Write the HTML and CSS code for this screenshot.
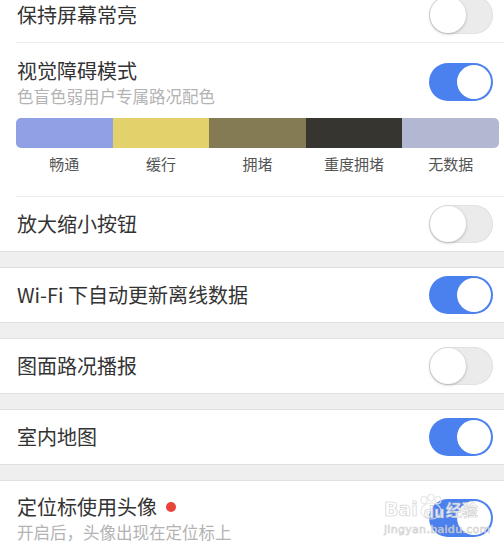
FILE: index.html
```html
<!DOCTYPE html>
<html lang="zh-CN">
<head>
    <meta charset="UTF-8">
    <meta name="viewport" content="width=device-width, initial-scale=1.0">
    <title>设置</title>
    <link rel="stylesheet" href="styles.css">
</head>
<body>
    <div class="settings">
        <section class="group">
            <div class="item">
                <div class="label">保持屏幕常亮</div>
                <span class="switch"></span>
            </div>
            <div class="item item-tall">
                <div class="item-head">
                    <div class="label-block">
                        <div class="label">视觉障碍模式</div>
                        <div class="sub">色盲色弱用户专属路况配色</div>
                    </div>
                    <span class="switch on"></span>
                </div>
                <div class="legend-bar">
                    <span class="c1"></span>
                    <span class="c2"></span>
                    <span class="c3"></span>
                    <span class="c4"></span>
                    <span class="c5"></span>
                </div>
                <div class="legend-text">
                    <span>畅通</span>
                    <span>缓行</span>
                    <span>拥堵</span>
                    <span>重度拥堵</span>
                    <span>无数据</span>
                </div>
            </div>
            <div class="item">
                <div class="label">放大缩小按钮</div>
                <span class="switch"></span>
            </div>
        </section>

        <section class="group">
            <div class="item">
                <div class="label">Wi-Fi 下自动更新离线数据</div>
                <span class="switch on"></span>
            </div>
        </section>

        <section class="group">
            <div class="item">
                <div class="label">图面路况播报</div>
                <span class="switch"></span>
            </div>
        </section>

        <section class="group">
            <div class="item">
                <div class="label">室内地图</div>
                <span class="switch on"></span>
            </div>
        </section>

        <section class="group">
            <div class="item item-sub">
                <div class="label-block">
                    <div class="label">定位标使用头像 <i class="dot"></i></div>
                    <div class="sub">开启后，头像出现在定位标上</div>
                </div>
                <span class="switch on"></span>
            </div>
        </section>
    </div>

    <div class="watermark">
        <div class="wm-logo">
            <span>Bai</span>
            <span class="wm-paw">
                <svg width="26" height="26" viewBox="0 0 26 26">
                    <g fill="none" stroke="#e4e4e4" stroke-width="1.2">
                        <ellipse cx="6" cy="6" rx="3" ry="3.6"/>
                        <ellipse cx="13" cy="3.6" rx="3" ry="3.4"/>
                        <ellipse cx="20" cy="6" rx="3" ry="3.6"/>
                        <ellipse cx="13" cy="17" rx="10" ry="8"/>
                    </g>
                </svg>
                <span class="wm-du">du</span>
            </span>
            <span>经验</span>
        </div>
        <div class="wm-url">jingyan.baidu.com</div>
    </div>
</body>
</html>
```

FILE: styles.css
```css
body {
    margin: 0;
    background-color: #efefef;
    font-family: "Noto Sans CJK SC", "Noto Sans", sans-serif;
    color: #333;
    overflow: hidden;
}
.settings {
    margin-top: -12px;
}
.group {
    background-color: #fff;
    border-top: 1px solid #e0e0e0;
    border-bottom: 1px solid #e0e0e0;
    margin-bottom: 15px;
}
.group:first-child {
    border-top: none;
}
.item {
    display: flex;
    align-items: center;
    justify-content: space-between;
    height: 54px;
    padding: 0 11px 0 17px;
    position: relative;
}
.item + .item::before {
    content: "";
    position: absolute;
    top: -1px;
    left: 16px;
    right: 0;
    height: 1px;
    background-color: #ececec;
}
.item + .item {
    margin-top: 1px;
}
.label {
    font-size: 20px;
    line-height: 28px;
    display: flex;
    align-items: center;
}
.sub {
    font-size: 16.5px;
    line-height: 22px;
    color: #b3b3b3;
}
.dot {
    display: inline-block;
    width: 10px;
    height: 10px;
    border-radius: 50%;
    background-color: #e8443a;
    margin-left: 9px;
}
.item-tall {
    display: block;
    height: auto;
    padding: 14px 11px 22px 16px;
}
.item-head {
    display: flex;
    align-items: center;
    justify-content: space-between;
    padding-left: 1px;
}
.item-sub {
    height: 66px;
    align-items: flex-start;
    padding-top: 12px;
}
.item-sub .switch {
    margin-top: 6px;
}
.legend-bar {
    display: grid;
    grid-template-columns: repeat(5, 1fr);
    height: 30px;
    margin: 11px -6px 0 0;
    border-radius: 5px;
    overflow: hidden;
}
.c1 { background-color: #8fa0e5; }
.c2 { background-color: #e3d16b; }
.c3 { background-color: #847b55; }
.c4 { background-color: #37352f; }
.c5 { background-color: #b3b8d2; }
.legend-text {
    display: grid;
    grid-template-columns: repeat(5, 1fr);
    margin: 6px -6px 0 0;
    font-size: 15px;
    line-height: 20px;
    color: #555;
    text-align: center;
}
.switch {
    flex: none;
    position: relative;
    width: 64px;
    height: 38px;
    border-radius: 19px;
    background-color: #ebebeb;
    box-shadow: inset 0 0 0 1px #e2e2e2;
}
.switch::after {
    content: "";
    position: absolute;
    top: 1px;
    left: 1px;
    width: 36px;
    height: 36px;
    border-radius: 50%;
    background-color: #fff;
    box-shadow: 0 1px 3px rgba(0, 0, 0, 0.25);
}
.switch.on {
    background-color: #4b80ef;
    box-shadow: none;
}
.switch.on::after {
    left: auto;
    right: 2px;
    top: 2px;
    width: 34px;
    height: 34px;
    box-shadow: none;
}
.watermark {
    position: absolute;
    left: 384px;
    top: 494px;
    color: #fff;
    font-family: "DejaVu Sans", sans-serif;
    -webkit-text-stroke: 0.6px #c4c4c4;
    opacity: 0.85;
}
.wm-logo {
    display: flex;
    align-items: flex-end;
    font-size: 19px;
    line-height: 22px;
    font-weight: bold;
}
.wm-logo span:last-child {
    font-family: "Noto Sans CJK SC", sans-serif;
    font-size: 16px;
    margin-left: 2px;
}
.wm-paw {
    position: relative;
    width: 26px;
    height: 26px;
}
.wm-paw svg {
    display: block;
}
.wm-du {
    position: absolute;
    left: 4px;
    bottom: 1px;
    font-size: 13px;
    line-height: 16px;
}
.wm-url {
    font-size: 11px;
    line-height: 14px;
    margin-top: 3px;
    letter-spacing: 0.3px;
}
```
